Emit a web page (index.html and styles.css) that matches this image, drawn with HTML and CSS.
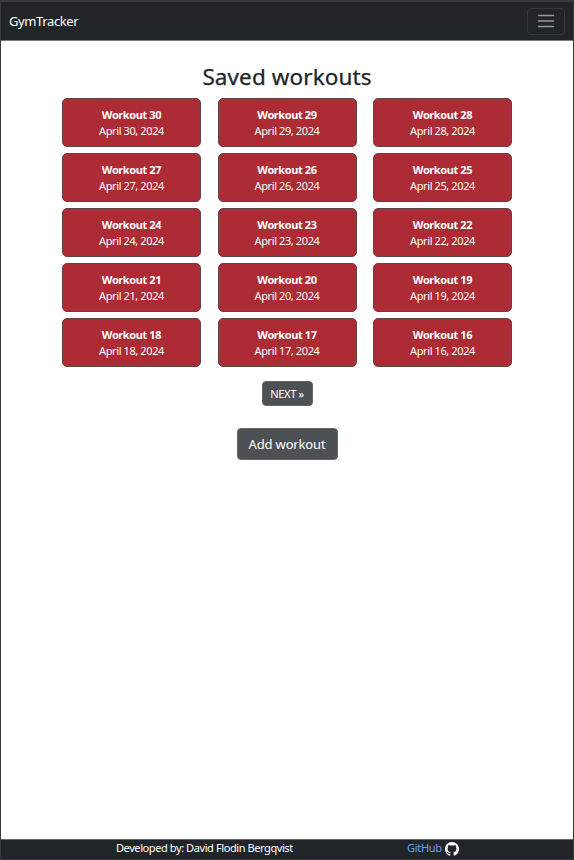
FILE: index.html
```html
<!DOCTYPE html>
<html lang="en">
<head>
<meta charset="utf-8">
<title>GymTracker</title>
<link rel="stylesheet" href="styles.css">
</head>
<body>
<header class="navbar">
  <a class="brand">GymTracker</a>
  <button class="toggler" aria-label="Toggle navigation">
    <svg width="20" height="20" viewBox="0 0 20 20"><path d="M2.5 4.5h15M2.5 10h15M2.5 15.5h15" stroke="#96989a" stroke-width="1.4" stroke-linecap="round"/></svg>
  </button>
</header>
<main>
  <h1>Saved workouts</h1>
  <div class="grid">
    <a class="card"><strong>Workout 30</strong><span>April 30, 2024</span></a>
    <a class="card"><strong>Workout 29</strong><span>April 29, 2024</span></a>
    <a class="card"><strong>Workout 28</strong><span>April 28, 2024</span></a>
    <a class="card"><strong>Workout 27</strong><span>April 27, 2024</span></a>
    <a class="card"><strong>Workout 26</strong><span>April 26, 2024</span></a>
    <a class="card"><strong>Workout 25</strong><span>April 25, 2024</span></a>
    <a class="card"><strong>Workout 24</strong><span>April 24, 2024</span></a>
    <a class="card"><strong>Workout 23</strong><span>April 23, 2024</span></a>
    <a class="card"><strong>Workout 22</strong><span>April 22, 2024</span></a>
    <a class="card"><strong>Workout 21</strong><span>April 21, 2024</span></a>
    <a class="card"><strong>Workout 20</strong><span>April 20, 2024</span></a>
    <a class="card"><strong>Workout 19</strong><span>April 19, 2024</span></a>
    <a class="card"><strong>Workout 18</strong><span>April 18, 2024</span></a>
    <a class="card"><strong>Workout 17</strong><span>April 17, 2024</span></a>
    <a class="card"><strong>Workout 16</strong><span>April 16, 2024</span></a>
  </div>
  <button class="btn next">NEXT »</button>
  <button class="btn add">Add workout</button>
</main>
<footer>
  <span class="credit">Developed by: David Flodin Bergqvist</span>
  <a class="github"><span>GitHub</span>
    <svg width="14" height="14" viewBox="0 0 16 16" fill="#fff"><path d="M8 0C3.58 0 0 3.58 0 8c0 3.54 2.29 6.53 5.47 7.59.4.07.55-.17.55-.38 0-.19-.01-.82-.01-1.49-2.01.37-2.53-.49-2.69-.94-.09-.23-.48-.94-.82-1.13-.28-.15-.68-.52-.01-.53.63-.01 1.08.58 1.23.82.72 1.21 1.87.87 2.33.66.07-.52.28-.87.51-1.07-1.78-.2-3.64-.89-3.64-3.95 0-.87.31-1.59.82-2.15-.08-.2-.36-1.02.08-2.12 0 0 .67-.21 2.2.82a7.6 7.6 0 0 1 4 0c1.53-1.04 2.2-.82 2.2-.82.44 1.1.16 1.92.08 2.12.51.56.82 1.27.82 2.15 0 3.07-1.87 3.75-3.65 3.95.29.25.54.73.54 1.48 0 1.07-.01 1.93-.01 2.2 0 .21.15.46.55.38A8.01 8.01 0 0 0 16 8c0-4.42-3.58-8-8-8z"/></svg>
  </a>
</footer>
</body>
</html>
```
FILE: styles.css
```css
* { box-sizing: border-box; }
body {
  margin: 0;
  height: 860px;
  display: flex;
  flex-direction: column;
  border: 1px solid #39393b;
  border-top-width: 2px;
  background: #fff;
  color: #212529;
  font-family: "Noto Sans", sans-serif;
  overflow: hidden;
}
button { font-family: inherit; }
.navbar {
  height: 39px;
  flex: none;
  display: flex;
  align-items: center;
  justify-content: space-between;
  padding: 0 8px;
  background: #212529;
  border-bottom: 1px solid #797b7d;
}
.brand { color: #fff; font-size: 13px; letter-spacing: -0.38px; }
.toggler {
  width: 38px;
  height: 27px;
  padding: 0;
  display: flex;
  align-items: center;
  justify-content: center;
  background: none;
  border: 1px solid #34383c;
  border-radius: 4px;
}
main {
  flex: 1;
  display: flex;
  flex-direction: column;
  align-items: center;
}
h1 {
  margin: 20px 0 6px;
  font-size: 22.5px;
  line-height: 31px;
  font-weight: 400;
  letter-spacing: 0.1px;
  -webkit-text-stroke: 0.25px #212529;
}
.grid {
  display: grid;
  grid-template-columns: repeat(3, 139px);
  grid-auto-rows: 49px;
  gap: 5.9px 16.5px;
}
.card {
  display: flex;
  flex-direction: column;
  align-items: center;
  padding-top: 8px;
  background: #ac2b34;
  border: 1px solid #62434a;
  border-radius: 5px;
  color: #fff;
  font-size: 11px;
  line-height: 16px;
}
.card strong { letter-spacing: -0.4px; }
.card span { letter-spacing: -0.4px; }
.btn {
  padding: 0;
  color: #fff;
  background: #4d5154;
  border: 1px solid #64686b;
}
.next {
  width: 51px;
  height: 25px;
  margin-top: 14px;
  border-radius: 4px;
  font-size: 11px;
  letter-spacing: -0.3px;
}
.add {
  width: 101px;
  height: 32px;
  margin-top: 22px;
  border-radius: 4px;
  font-size: 13px;
  letter-spacing: -0.15px;
}
footer {
  height: 20px;
  flex: none;
  display: flex;
  align-items: center;
  padding: 0 0 3px 115px;
  background: #212529;
  border-top: 1px solid #66696b;
  color: #fff;
  font-size: 11px;
  line-height: 16px;
}
.credit { width: 291px; letter-spacing: -0.41px; white-space: nowrap; }
.github {
  display: flex;
  align-items: center;
  gap: 3px;
  color: #6ea0fb;
  letter-spacing: -0.3px;
}
.github svg { margin-top: 2px; }
```
